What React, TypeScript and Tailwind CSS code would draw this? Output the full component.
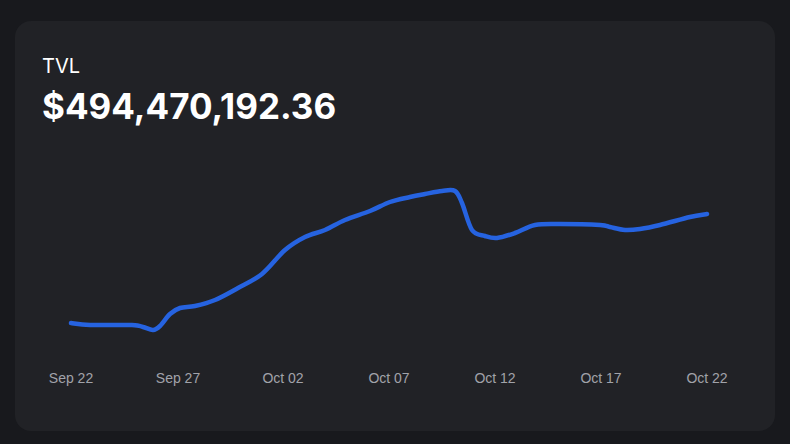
import React from "react";

const pts: [number, number][] = [[71,323],[90,325],[132,325],[143,327],[153,330],[160,326],[170,314],[180,308],[195,306],[215,300],[238,288],[262,274],[285,250],[305,237],[325,230],[345,220],[370,211],[390,202],[410,197],[425,194],[442,191],[455,191],[462,203],[472,230],[485,236],[497,238],[515,233],[535,225],[560,224],[600,225],[610,227],[625,230],[640,229],[660,225],[690,217],[707,214]];

function smooth(p: [number, number][]) {
  let d = `M${p[0][0]},${p[0][1]}`;
  for (let i = 0; i < p.length - 1; i++) {
    const p0 = p[i - 1] || p[i], p1 = p[i], p2 = p[i + 1], p3 = p[i + 2] || p2;
    const c1x = p1[0] + (p2[0] - p0[0]) / 6, c1y = p1[1] + (p2[1] - p0[1]) / 6;
    const c2x = p2[0] - (p3[0] - p1[0]) / 6, c2y = p2[1] - (p3[1] - p1[1]) / 6;
    d += ` C${c1x},${c1y} ${c2x},${c2y} ${p2[0]},${p2[1]}`;
  }
  return d;
}

const labels: [string, number][] = [["Sep 22",71],["Sep 27",178],["Oct 02",283],["Oct 07",389],["Oct 12",495],["Oct 17",601],["Oct 22",707]];

export default function App() {
  return (
    <div className="w-[790px] h-[444px] bg-[#18191d] pt-[21px] pl-[15px]" style={{ fontFamily: "Inter, 'Liberation Sans', sans-serif" }}>
      <div className="w-[760px] h-[410px] bg-[#212226] rounded-2xl overflow-hidden">
        <div className="pt-[33px] pl-[27px]">
          <div className="text-[20px] leading-[24px] text-white">TVL</div>
          <div className="text-[35px] leading-[40px] font-bold text-white mt-[8px]">$494,470,192.36</div>
        </div>
        <svg width="760" height="300" viewBox="15 125 760 300" className="block -mt-[1px]">
          <path d={smooth(pts)} fill="none" stroke="#2663e0" strokeWidth="4.5" strokeLinecap="round" strokeLinejoin="round" />
          {labels.map(([t, x]) => (
            <text key={t} x={x} y={383} textAnchor="middle" fontSize="14" fill="#a1a3aa" fontFamily="'Liberation Sans', Arial, sans-serif">{t}</text>
          ))}
        </svg>
      </div>
    </div>
  );
}
